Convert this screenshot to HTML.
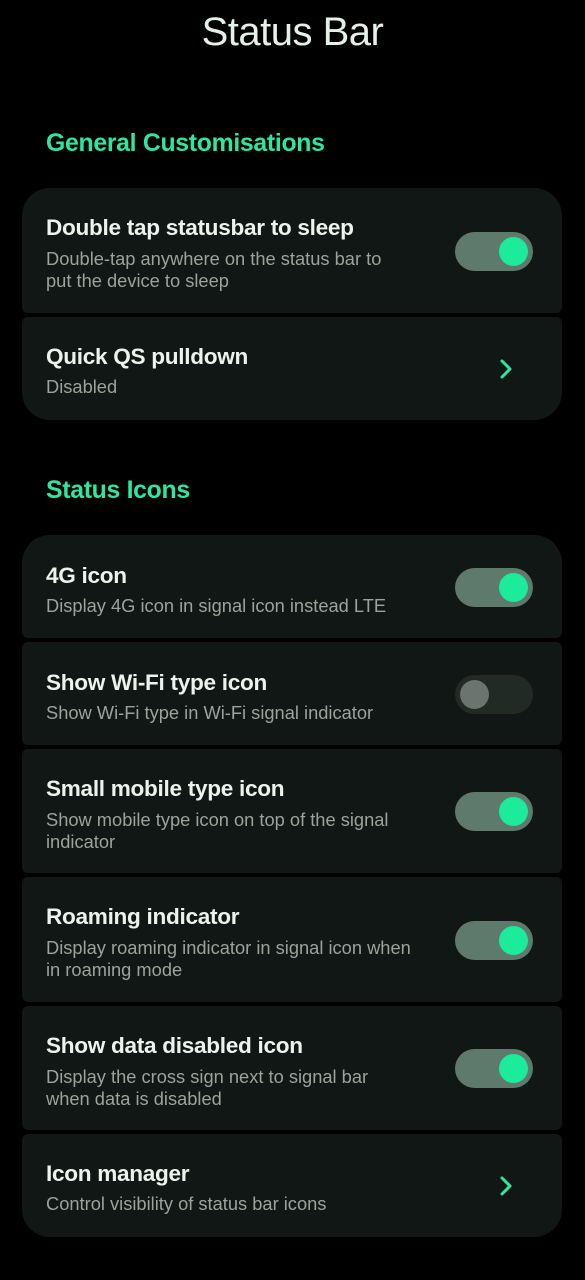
<!DOCTYPE html>
<html><head><meta charset="utf-8"><style>
*{margin:0;padding:0;box-sizing:border-box}
body{width:585px;height:1280px;background:#000;font-family:"Liberation Sans",sans-serif;position:relative;overflow:hidden}
.h{position:absolute;left:0;width:585px;text-align:center;top:10px;font-size:40px;color:#e4f0e8;letter-spacing:-0.5px}
.sec{position:absolute;left:46px;font-size:24.8px;font-weight:bold;color:#2ee6a0;letter-spacing:-0.3px}
.it{position:absolute;left:22px;width:540px;background:#111714;border-radius:6px}
.t{position:absolute;left:24px;font-size:22.6px;font-weight:bold;color:#eef2ef;letter-spacing:-0.3px;top:27px}
.s{position:absolute;left:24px;font-size:18.3px;color:#9aa39e;line-height:22px;width:400px;white-space:nowrap}
.tg{position:absolute;left:433px;width:78px;height:39px;border-radius:20px;background:#5d7a6c}
.tg::after{content:"";position:absolute;right:5px;top:5px;width:29px;height:29px;border-radius:50%;background:#1ceb9c}
.tg.off{background:#222a26}
.tg.off::after{left:5px;right:auto;background:#6b746f}
.ch{position:absolute;left:476px;width:16px;height:22px}
</style></head><body>
<div class="h">Status Bar</div>
<div class="sec" style="top:130px">General Customisations</div>

<div class="it" style="top:188px;height:125px;border-radius:28px 28px 6px 6px">
<div class="t">Double tap statusbar to sleep</div>
<div class="s" style="top:60px">Double-tap anywhere on the status bar to<br>put the device to sleep</div>
<div class="tg" style="top:44px"></div></div>
<div class="it" style="top:317px;height:103px;border-radius:6px 6px 28px 28px">
<div class="t">Quick QS pulldown</div>
<div class="s" style="top:59px">Disabled</div>
<svg class="ch" style="top:41px" viewBox="0 0 16 22"><path d="M4 3l8 8-8 8" stroke="#2ee6a0" stroke-width="3" fill="none" stroke-linecap="round" stroke-linejoin="round"/></svg></div>

<div class="sec" style="top:477px">Status Icons</div>

<div class="it" style="top:535px;height:103px;border-radius:28px 28px 6px 6px">
<div class="t" style="top:28px">4G icon</div>
<div class="s" style="top:60px">Display 4G icon in signal icon instead LTE</div>
<div class="tg" style="top:33px"></div></div>
<div class="it" style="top:642px;height:103px">
<div class="t" style="top:28px">Show Wi-Fi type icon</div>
<div class="s" style="top:60px">Show Wi-Fi type in Wi-Fi signal indicator</div>
<div class="tg off" style="top:33px"></div></div>
<div class="it" style="top:749px;height:124px">
<div class="t">Small mobile type icon</div>
<div class="s" style="top:60px">Show mobile type icon on top of the signal<br>indicator</div>
<div class="tg" style="top:43px"></div></div>
<div class="it" style="top:877px;height:125px">
<div class="t">Roaming indicator</div>
<div class="s" style="top:60px">Display roaming indicator in signal icon when<br>in roaming mode</div>
<div class="tg" style="top:44px"></div></div>
<div class="it" style="top:1006px;height:124px">
<div class="t">Show data disabled icon</div>
<div class="s" style="top:60px">Display the cross sign next to signal bar<br>when data is disabled</div>
<div class="tg" style="top:43px"></div></div>
<div class="it" style="top:1134px;height:103px;border-radius:6px 6px 28px 28px">
<div class="t">Icon manager</div>
<div class="s" style="top:59px">Control visibility of status bar icons</div>
<svg class="ch" style="top:41px" viewBox="0 0 16 22"><path d="M4 3l8 8-8 8" stroke="#2ee6a0" stroke-width="3" fill="none" stroke-linecap="round" stroke-linejoin="round"/></svg></div>
</body></html>
